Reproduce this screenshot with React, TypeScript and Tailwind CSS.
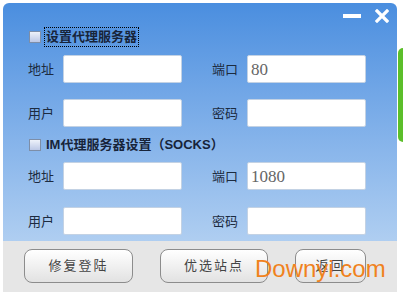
import React from "react";

const FONT = "font-['Liberation_Sans','Noto_Sans_CJK_SC',sans-serif]";

function Field({ label, value }: { label: string; value?: string }) {
  return (
    <div className="flex items-center">
      <span className="w-[35px] text-[13px] leading-none text-[#1c2b40]">
        {label}
      </span>
      <div className="flex h-[28px] w-[119px] items-center rounded-[2px] border border-[#c3d2e4] bg-white pl-[3px]">
        {value && (
          <span className="font-['Liberation_Serif',serif] text-[17px] leading-none text-[#666]">
            {value}
          </span>
        )}
      </div>
    </div>
  );
}

function Check({ label, focused }: { label: string; focused?: boolean }) {
  return (
    <div className="flex h-[20px] items-center pl-[26px]">
      <span className="h-[12px] w-[12px] border border-[#7d8ea8] bg-gradient-to-b from-[#eef2fa] to-[#bcc8e6]" />
      <span
        className={
          "ml-[3px] px-[1px] text-[13px] font-bold leading-[18px] text-[#17243a] " +
          (focused ? "border border-dotted border-black" : "border border-transparent")
        }
      >
        {label}
      </span>
    </div>
  );
}

function Btn({ label, w }: { label: string; w: string }) {
  return (
    <div
      className={
        "flex h-[34px] items-center justify-center rounded-[8px] border border-[#8c8c8c] bg-gradient-to-b from-white to-[#e2e2e2] text-[13px] tracking-[2px] text-[#444] " +
        w
      }
    >
      {label}
    </div>
  );
}

export default function App() {
  return (
    <div className={"relative h-[295px] w-[403px] overflow-hidden bg-white " + FONT}>
      {/* background bits outside the dialog */}
      <div className="absolute right-0 top-[48px] h-[94px] w-[5px] rounded-l-[6px] bg-[#5cbf2a]" />

      <div className="ml-[3px] mt-[3px] flex h-[289px] w-[394px] flex-col overflow-hidden rounded-t-[6px]">
        <div className="relative flex h-[238px] flex-col bg-gradient-to-b from-[#4a8edf] to-[#afcef1]">
          {/* window controls */}
          <div className="absolute left-[340px] top-[11px] h-[4px] w-[18px] bg-white" />
          <svg
            className="absolute left-[372px] top-[6px]"
            width="14"
            height="14"
            viewBox="0 0 14 14"
          >
            <path d="M2 2 L12 12 M12 2 L2 12" stroke="white" strokeWidth="3.2" strokeLinecap="square" />
          </svg>

          <div className="mt-[24px]">
            <Check label="设置代理服务器" focused />
          </div>
          <div className="mt-[8px] flex gap-[30px] pl-[25px]">
            <Field label="地址" />
            <Field label="端口" value="80" />
          </div>
          <div className="mt-[16px] flex gap-[30px] pl-[25px]">
            <Field label="用户" />
            <Field label="密码" />
          </div>
          <div className="mt-[8px]">
            <Check label="IM代理服务器设置（SOCKS）" />
          </div>
          <div className="mt-[7px] flex gap-[30px] pl-[25px]">
            <Field label="地址" />
            <Field label="端口" value="1080" />
          </div>
          <div className="mt-[17px] flex gap-[30px] pl-[25px]">
            <Field label="用户" />
            <Field label="密码" />
          </div>
        </div>

        <div className="flex flex-1 gap-[27px] bg-[#e6e6e6] pl-[21px] pt-[8px]">
          <Btn label="修复登陆" w="w-[109px]" />
          <Btn label="优选站点" w="w-[108px]" />
          <Btn label="返回" w="w-[71px]" />
        </div>
      </div>

      {/* watermark */}
      <span className="absolute left-[255px] top-[254px] font-['Liberation_Sans',sans-serif] text-[24px] leading-[30px] text-[#f0821e]">
        Downyi.com
      </span>
    </div>
  );
}
